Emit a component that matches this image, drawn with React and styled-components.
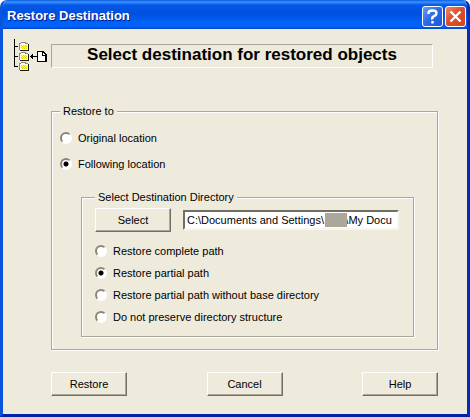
import { useState } from "react";
import styled, { createGlobalStyle } from "styled-components";

const face = "#eeeadc";
const shadow = "#aca899";
const darkShadow = "#716f64";

const GlobalStyle = createGlobalStyle`
  * {
    box-sizing: border-box;
  }
  body {
    margin: 0;
    background: #fff;
    color: #000;
    font: 11px/14px "Liberation Sans", Arial, sans-serif;
  }
`;

const Window = styled.div`
  display: flex;
  flex-direction: column;
  min-height: 100vh;
  background: ${face};
  border: 3px solid #0855dd;
  border-top: 0;
  border-radius: 7px 7px 0 0;
  border-right-color: #0030b8;
  border-bottom-color: #0022a8;
  overflow: hidden;
`;

const TitleBar = styled.header`
  display: flex;
  align-items: center;
  gap: 2px;
  height: 29px;
  margin: 0 -3px;
  padding: 3px 4px 0 7px;
  background: linear-gradient(
    #0a5be0 0,
    #3a93ff 2px,
    #0458e8 5px,
    #0050e0 14px,
    #0064fb 24px,
    #0060f5 27px,
    #0043c8 29px
  );
`;

const WindowTitle = styled.span`
  flex: 1;
  color: #fff;
  font: bold 13px/16px "Liberation Sans", Arial, sans-serif;
  text-shadow: 1px 1px 0 #0a1883;
`;

const CaptionButton = styled.button`
  display: flex;
  align-items: center;
  justify-content: center;
  width: 21px;
  height: 21px;
  padding: 0;
  border: 1px solid #fff;
  border-radius: 3px;
  background: ${(props) =>
    props.$close
      ? "linear-gradient(135deg, #ec8a6c, #dd4f28 45%, #d2441c)"
      : "linear-gradient(135deg, #6a9cf4, #2b6ae4 50%, #1a58d8)"};
`;

const Body = styled.main`
  display: flex;
  flex-direction: column;
  padding: 9px 29px 18px 10px;
`;

const Heading = styled.div`
  display: flex;
  gap: 4px;
  margin-right: 5px;
`;

const HeadingFrame = styled.h1`
  flex: 1;
  height: 24px;
  margin: 6px 0 0;
  border: 1px solid;
  border-color: ${shadow} #fff #fff ${shadow};
  font-size: 17px;
  line-height: 20px;
  text-align: center;
`;

const Content = styled.form`
  display: flex;
  flex-direction: column;
  gap: 22px;
  margin: 32px 0 0 38px;
`;

const Group = styled.fieldset`
  min-width: 0;
  margin: 0;
  padding: 13px 23px 12px 8px;
  border: 1px solid ${shadow};
  box-shadow: 1px 1px 0 #fff, inset 1px 1px 0 #fff;
`;

const InnerGroup = styled(Group)`
  margin: 19px 0 0 21px;
  padding: 4px 14px 12px 13px;
`;

const Legend = styled.legend`
  padding: 0 3px;
  background: ${face};
`;

const Options = styled.div`
  display: flex;
  flex-direction: column;
  gap: ${(props) => props.$gap};
`;

const Option = styled.label`
  display: flex;
  align-items: center;
  gap: 6px;
`;

const Radio = styled.input`
  appearance: none;
  flex: none;
  width: 12px;
  height: 12px;
  margin: 0;
  border: 2px solid;
  border-color: #8a8778 #fff #fff #8a8778;
  border-radius: 50%;
  background: #fff;

  &:checked {
    background: radial-gradient(circle, #000 2px, #fff 3px);
  }
`;

const PathRow = styled.div`
  display: flex;
  align-items: center;
  gap: 12px;
  margin-bottom: 12px;
`;

const Button = styled.button`
  flex: none;
  width: 76px;
  height: 24px;
  padding: 0;
  border: 1px solid;
  border-color: #fff ${darkShadow} ${darkShadow} #fff;
  background: ${face};
  box-shadow: inset -1px -1px 0 ${shadow};
  color: #000;
  font: inherit;
`;

const PathField = styled.div`
  position: relative;
  flex: 1;
`;

const PathInput = styled.input`
  display: block;
  width: 100%;
  height: 20px;
  padding: 0 2px;
  border: 2px solid;
  border-color: ${darkShadow} #f8f6ee #f8f6ee ${darkShadow};
  border-radius: 0;
  background: #fff;
  color: #000;
  font: inherit;
`;

const Redaction = styled.span`
  position: absolute;
  top: 3px;
  left: 142px;
  width: 22px;
  height: 14px;
  background: ${shadow};
`;

const Actions = styled.footer`
  display: flex;
  justify-content: space-between;
`;

const Folder = ({ y }) => (
  <g transform={`translate(6 ${y})`}>
    <path d="M1 2h9v7H1z" fill="#1c1a14" />
    <path d="M0 1h2V0h5v1h2v7H0z" fill="#8a8778" />
    <path d="M1 2h1V1h4v1h3v6H1z" fill="#fffff0" />
    <path d="M2 3h6v4H2z" fill="#fbf8a8" />
    <path
      d="M2 3h1v1H2zM4 3h1v1H4zM6 3h1v1H6zM3 4h1v1H3zM5 4h1v1H5zM7 4h1v1H7zM2 5h1v1H2zM4 5h1v1H4zM6 5h1v1H6zM3 6h1v1H3zM5 6h1v1H5zM7 6h1v1H7z"
      fill="#e0d800"
    />
  </g>
);

const DestinationIcon = () => (
  <svg width="34" height="34" viewBox="0 0 34 34" shapeRendering="crispEdges" aria-hidden="true">
    <path d="M1 1h1v28H1zM2 8h3v1H2zM2 18h3v1H2zM2 28h3v1H2z" fill="#000" />
    <Folder y={4} />
    <Folder y={14} />
    <Folder y={24} />
    <path d="M17 18h1v-1h1v-1h1v2h4v1h-4v2h-1v-1h-1v-1h-1z" fill="#000" />
    <path d="M24 13h7v1h1v1h1v1h1v8H24z" fill="#000" />
    <path d="M25 14h4v4h3v5h-7z" fill="#fff" />
    <path d="M30 15h1v1h1v1h-2z" fill="#fff" />
  </svg>
);

const destinations = ["Original location", "Following location"];

const pathModes = [
  "Restore complete path",
  "Restore partial path",
  "Restore partial path without base directory",
  "Do not preserve directory structure",
];

const RadioList = ({ name, items, initial, gap }) => {
  const [selected, setSelected] = useState(initial);
  return (
    <Options $gap={gap}>
      {items.map((item) => (
        <Option key={item}>
          <Radio
            type="radio"
            name={name}
            checked={selected === item}
            onChange={() => setSelected(item)}
          />
          {item}
        </Option>
      ))}
    </Options>
  );
};

export default function App() {
  return (
    <Window>
      <GlobalStyle />
      <TitleBar>
        <WindowTitle>Restore Destination</WindowTitle>
        <CaptionButton type="button" aria-label="What's this?">
          <svg width="13" height="15" viewBox="0 0 13 15" fill="none" stroke="#fff" strokeWidth="2.4">
            <path d="M2.5 5V4q0-2.500 4-2.500t4 2.500q0 2-2.500 3.200T6.500 10.500" />
            <path d="M6.500 12v2.500" />
          </svg>
        </CaptionButton>
        <CaptionButton type="button" $close aria-label="Close">
          <svg width="13" height="13" viewBox="0 0 13 13" stroke="#fff" strokeWidth="2.4">
            <path d="M1.500 1.500l10 10M11.500 1.500l-10 10" />
          </svg>
        </CaptionButton>
      </TitleBar>
      <Body>
        <Heading>
          <DestinationIcon />
          <HeadingFrame>Select destination for restored objects</HeadingFrame>
        </Heading>
        <Content onSubmit={(e) => e.preventDefault()}>
          <Group>
            <Legend>Restore to</Legend>
            <RadioList
              name="destination"
              items={destinations}
              initial="Following location"
              gap="12px"
            />
            <InnerGroup>
              <Legend>Select Destination Directory</Legend>
              <PathRow>
                <Button type="button">Select</Button>
                <PathField>
                  <PathInput
                    aria-label="Destination directory"
                    defaultValue={"C:\\Documents and Settings\\       \\My Docu"}
                  />
                  <Redaction />
                </PathField>
              </PathRow>
              <RadioList
                name="pathMode"
                items={pathModes}
                initial="Restore partial path"
                gap="8px"
              />
            </InnerGroup>
          </Group>
          <Actions>
            <Button type="submit">Restore</Button>
            <Button type="button">Cancel</Button>
            <Button type="button">Help</Button>
          </Actions>
        </Content>
      </Body>
    </Window>
  );
}
